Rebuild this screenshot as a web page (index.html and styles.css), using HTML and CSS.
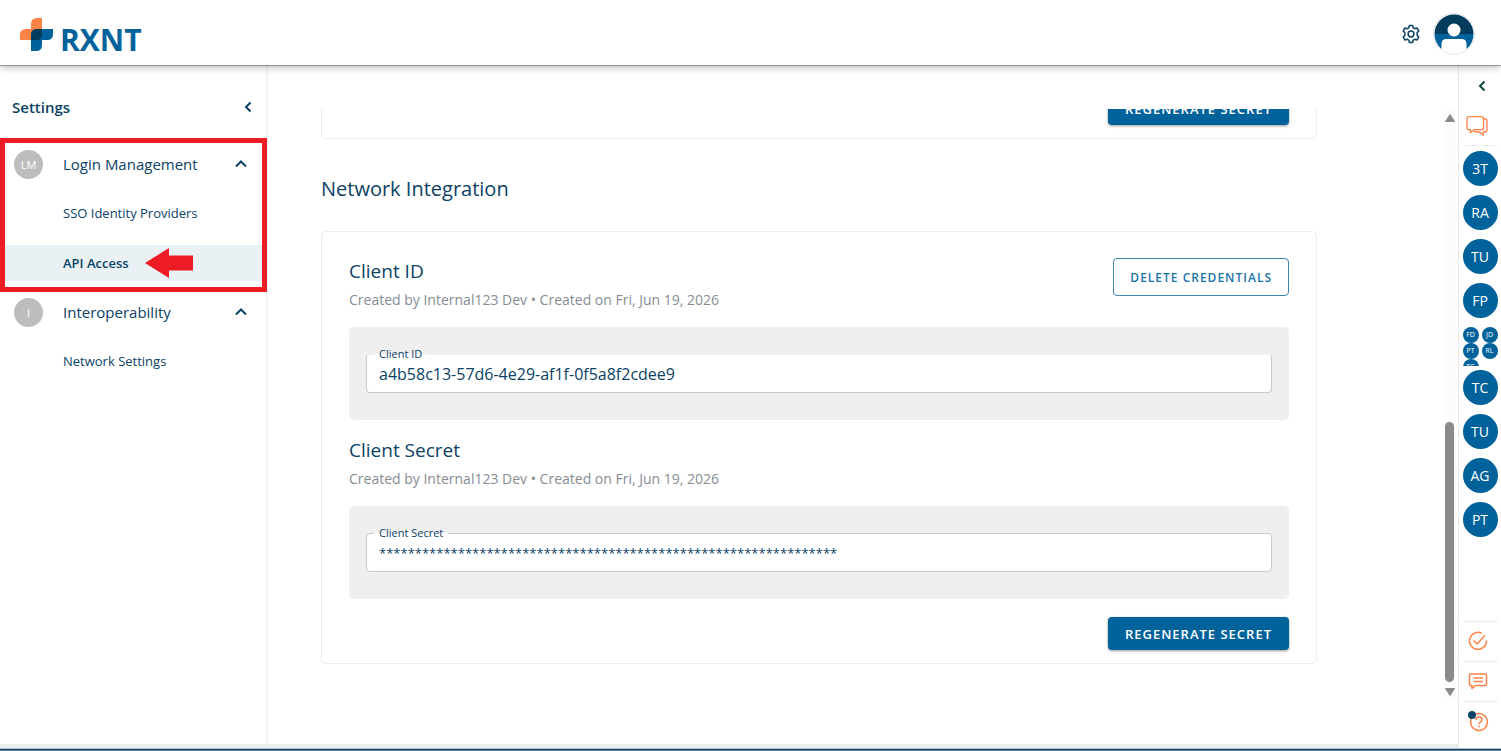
FILE: index.html
```html
<!DOCTYPE html>
<html lang="en">
<head>
<meta charset="utf-8">
<title>RXNT Settings</title>
<link rel="stylesheet" href="styles.css">
</head>
<body>
<div class="app">
  <header class="topbar">
    <a class="logo" href="#">
      <svg width="33" height="33" viewBox="0 0 33 33" aria-hidden="true">
        <path d="M11 11V6Q11 0 17 0H22V16Q22 22 16 22H0V17Q0 11 6 11Z" fill="#ff8246"/>
        <path d="M17 11H33V16Q33 22 27 22H22V27Q22 33 16 33H11V17Q11 11 17 11Z" fill="#00629b"/>
        <path d="M17 11H22V16Q22 22 16 22H11V17Q11 11 17 11Z" fill="#023b5c"/>
      </svg>
      <span class="logo-name">RXNT</span>
    </a>
    <div class="topbar-actions">
      <button class="icon-button" aria-label="Settings">
        <svg width="20" height="20" viewBox="0 0 20 20" fill="none" stroke="#0b4265" stroke-width="1.5" stroke-linejoin="round">
          <path d="M8.4 1.5h3.2l.6 2.3 1.5.9 2.3-.7 1.8 2.9-1.7 1.8v2.6l1.7 1.8-1.8 2.9-2.3-.7-1.5.9-.6 2.3H8.4l-.6-2.3-1.5-.9-2.3.7-1.8-2.9 1.7-1.8V8.7L2.200 6.900 4 4l2.300.7 1.500-.9z"/>
          <circle cx="10" cy="10" r="2.900"/>
        </svg>
      </button>
      <button class="icon-button" aria-label="Account">
        <svg width="42" height="42" viewBox="0 0 42 42">
          <circle cx="21" cy="21" r="20.500" fill="#fff" stroke="#e3e6e8"/>
          <path d="M1.500 21a19.500 19.500 0 0 1 39 0z" fill="#023b5c"/>
          <path d="M1.500 21a19.500 19.500 0 0 0 7 15V31q0-5 5-5h15q5 0 5 5v5a19.500 19.500 0 0 0 7-15z" fill="#00629b"/>
          <circle cx="21" cy="17" r="6.500" fill="#fff"/>
        </svg>
      </button>
    </div>
  </header>

  <div class="body">
    <div class="workspace">
      <div class="columns">
        <nav class="sidebar" aria-label="Settings">
          <div class="sidebar-head">
            <h2 class="sidebar-title">Settings</h2>
            <button class="icon-button" aria-label="Collapse settings">
              <svg width="12" height="12" viewBox="0 0 12 12" fill="none" stroke="#0b4265" stroke-width="2"><path d="M8.500 1.500 4 6l4.500 4.500"/></svg>
            </button>
          </div>
          <section class="group group-marked">
            <button class="group-head">
              <span class="badge">LM</span>
              <span class="group-name">Login Management</span>
              <svg width="12" height="12" viewBox="0 0 12 12" fill="none" stroke="#0b4265" stroke-width="2"><path d="M1 8.500l5-5 5 5"/></svg>
            </button>
            <a class="nav-link" href="#">SSO Identity Providers</a>
            <a class="nav-link nav-link-active" href="#" aria-current="page">API Access
              <svg width="48" height="30" viewBox="0 0 48 30"><path d="M0 15 24 0v7.500h24v15H24V30z" fill="#ed1c24"/></svg>
            </a>
          </section>
          <section class="group">
            <button class="group-head">
              <span class="badge">I</span>
              <span class="group-name">Interoperability</span>
              <svg width="12" height="12" viewBox="0 0 12 12" fill="none" stroke="#0b4265" stroke-width="2"><path d="M1 8.500l5-5 5 5"/></svg>
            </button>
            <a class="nav-link" href="#">Network Settings</a>
          </section>
        </nav>

        <main class="main">
          <div class="viewport">
            <div class="card card-previous">
              <button class="button button-solid">REGENERATE SECRET</button>
            </div>
            <h1 class="section-title">Network Integration</h1>
            <div class="card">
              <div class="card-head">
                <div>
                  <h2 class="card-title">Client ID</h2>
                  <p class="meta">Created by Internal123 Dev • Created on Fri, Jun 19, 2026</p>
                </div>
                <button class="button button-outline">DELETE CREDENTIALS</button>
              </div>
              <div class="panel">
                <div class="field field-soft">
                  <label class="field-label" for="client-id">Client ID</label>
                  <input class="field-input" id="client-id" type="text" readonly value="a4b58c13-57d6-4e29-af1f-0f5a8f2cdee9">
                </div>
              </div>
              <div class="card-head card-head-next">
                <div>
                  <h2 class="card-title">Client Secret</h2>
                  <p class="meta">Created by Internal123 Dev • Created on Fri, Jun 19, 2026</p>
                </div>
              </div>
              <div class="panel">
                <div class="field">
                  <label class="field-label" for="client-secret">Client Secret</label>
                  <input class="field-input field-secret" id="client-secret" type="text" readonly value="****************************************************************">
                </div>
              </div>
              <button class="button button-solid">REGENERATE SECRET</button>
            </div>
          </div>
          <div class="scrollbar" aria-hidden="true">
            <svg width="10" height="8" viewBox="0 0 10 8"><path d="M5 0.500 9.500 7.500H.5z" fill="#8a8a8a" stroke="#8a8a8a" stroke-linejoin="round"/></svg>
            <div class="scroll-space"></div>
            <div class="scroll-thumb"></div>
            <svg width="10" height="8" viewBox="0 0 10 8"><path d="M5 7.500 9.500.5H.5z" fill="#8a8a8a" stroke="#8a8a8a" stroke-linejoin="round"/></svg>
          </div>
        </main>
      </div>
      <div class="strip"></div>
    </div>

    <aside class="rail" aria-label="Messages">
      <button class="icon-button rail-toggle" aria-label="Expand messages">
        <svg width="12" height="12" viewBox="0 0 12 12" fill="none" stroke="#0b4a3f" stroke-width="2"><path d="M8.500 1.500 4 6l4.500 4.500"/></svg>
      </button>
      <button class="icon-button rail-chat" aria-label="Conversations">
        <svg width="22" height="22" viewBox="0 0 22 22" fill="none" stroke="#ff8246" stroke-width="1.300" stroke-linejoin="round">
          <path d="M3 1.700h12.500q2 0 2 2v9q0 2-2 2H8l-3.500 2.800v-2.800H3q-2 0-2-2v-9q0-2 2-2z"/>
          <path d="M17.500 4H19q2 0 2 2v9q0 2-2 2h-1.800v3.300L13.500 17H9.500l-2-1.500"/>
        </svg>
      </button>
      <div class="people">
        <button class="person">3T</button>
        <button class="person">RA</button>
        <button class="person">TU</button>
        <button class="person">FP</button>
        <button class="cluster">
          <span class="mini">FD</span><span class="mini">JD</span>
          <span class="mini">PT</span><span class="mini">RL</span>
          <span class="mini">TC</span>
        </button>
        <button class="person">TC</button>
        <button class="person">TU</button>
        <button class="person">AG</button>
        <button class="person">PT</button>
      </div>
      <div class="tools">
        <button class="tool" aria-label="Tasks">
          <svg width="20" height="20" viewBox="0 0 20 20" fill="none" stroke="#ff8246" stroke-width="1.500">
            <path d="M13.800 2.300A8.500 8.500 0 1 0 18.500 9.500"/><path d="M5.500 9.500 9.300 13 17 4.300"/>
          </svg>
        </button>
        <button class="tool" aria-label="Messages">
          <svg width="20" height="20" viewBox="0 0 20 20" fill="none" stroke="#ff8246" stroke-width="1.500" stroke-linejoin="round">
            <path d="M2.500 3h15q1 0 1 1v9.500q0 1-1 1H7.500L4 17.500v-3H2.500q-1 0-1-1V4q0-1 1-1z"/><path d="M5.500 7h9.500M5.500 10.500h9.500"/>
          </svg>
        </button>
        <button class="tool" aria-label="Help">
          <svg width="22" height="22" viewBox="0 0 22 22" fill="none" stroke="#ff8246" stroke-width="1.500">
            <circle cx="12" cy="12" r="8.500"/><path d="M9 10q0-3 3-3t3 2.500q0 1.500-1.500 2.300T12 14"/><path d="M12 15.500v1.800"/>
            <circle cx="5" cy="5" r="4" fill="#0b4265" stroke="none"/>
          </svg>
        </button>
      </div>
    </aside>
  </div>
  <footer class="baseline"></footer>
</div>
</body>
</html>
```
FILE: styles.css
```css
* {
  box-sizing: border-box;
}

body {
  margin: 0;
  background: #fff;
  color: #0b4265;
  font-family: "Open Sans", "Noto Sans", sans-serif;
  font-size: 13px;
}

h1, h2, p {
  margin: 0;
}

button {
  font: inherit;
  color: inherit;
  background: none;
  border: 0;
  padding: 0;
  cursor: pointer;
}

a {
  color: inherit;
  text-decoration: none;
}

svg {
  display: block;
  flex: none;
}

.app {
  display: flex;
  flex-direction: column;
  height: 100vh;
}

/* Top bar */
.topbar {
  position: relative;
  z-index: 2;
  display: flex;
  flex: none;
  align-items: center;
  justify-content: space-between;
  height: 65px;
  padding: 3px 26px 0 20px;
  background: #fff;
  box-shadow: 0 1px 1px rgba(0, 0, 0, 0.3), 0 3px 8px rgba(0, 0, 0, 0.22);
}

.logo {
  display: flex;
  align-items: center;
  gap: 7px;
}

.logo-name {
  color: #00629b;
  font-size: 30px;
  font-weight: 700;
  line-height: 32px;
  padding-top: 11px;
}

.topbar-actions {
  display: flex;
  align-items: center;
  gap: 12px;
}

.icon-button {
  display: flex;
  align-items: center;
  justify-content: center;
}

.body {
  display: flex;
  flex: 1;
  min-height: 0;
}

.workspace {
  display: flex;
  flex: 1;
  flex-direction: column;
  min-width: 0;
}

.columns {
  display: flex;
  flex: 1;
  min-height: 0;
}

.strip {
  height: 4px;
  background: #eee;
}

.baseline {
  flex: none;
  height: 3px;
  background: #0c3f5f;
  border-top: 1px solid #b5c9d6;
  border-bottom: 1px solid #5c88a0;
}

/* Sidebar */
.sidebar {
  flex: none;
  width: 268px;
  border-right: 2px solid #f3f3f3;
}

.sidebar-head {
  display: flex;
  align-items: center;
  justify-content: space-between;
  height: 77px;
  padding: 7px 12px 0;
}

.sidebar-title {
  font-size: 15px;
  font-weight: 600;
}

.group {
  position: relative;
  padding-bottom: 9px;
}

.group-marked::after {
  content: "";
  position: absolute;
  inset: -4px -1px -2px 0;
  border: 5px solid #ed1c24;
  pointer-events: none;
}

.group-head {
  display: flex;
  align-items: center;
  width: 100%;
  height: 44px;
  padding: 0 19px 0 14px;
  text-align: left;
}

.badge {
  display: flex;
  align-items: center;
  justify-content: center;
  width: 29px;
  height: 29px;
  border-radius: 50%;
  background: #bdbdbd;
  color: #fff;
  font-size: 11px;
}

.group-name {
  flex: 1;
  padding-left: 20px;
  font-size: 15px;
}

.nav-link {
  display: flex;
  align-items: center;
  gap: 16px;
  height: 36px;
  margin-top: 9px;
  padding-left: 63px;
  font-size: 13px;
}

.nav-link-active {
  margin-top: 14px;
  background: #eaf1f5;
  font-weight: 600;
}

/* Main column */
.main {
  display: flex;
  flex: 1;
  min-width: 0;
  padding: 44px 2px 45px 0;
}

.viewport {
  display: flex;
  flex: 1;
  flex-direction: column;
  justify-content: flex-end;
  min-width: 0;
  padding: 0 126px 35px 53px;
  overflow: hidden;
}

.card {
  display: flex;
  flex: none;
  flex-direction: column;
  padding: 26px 27px 13px;
  border: 1px solid #ededed;
  border-radius: 5px;
}

.card-previous {
  border-top: 0;
}

.section-title {
  flex: none;
  margin: 36px 0 28px;
  font-size: 20px;
  font-weight: 400;
  line-height: 28px;
}

.card-head {
  display: flex;
  align-items: flex-start;
  justify-content: space-between;
  padding-bottom: 16px;
}

.card-head-next {
  padding-top: 17px;
}

.card-title {
  font-size: 19px;
  font-weight: 500;
  line-height: 27px;
}

.meta {
  margin-top: 4px;
  color: #868d94;
  font-size: 14px;
  line-height: 22px;
}

.button {
  display: flex;
  align-items: center;
  justify-content: center;
  border-radius: 4px;
  font-weight: 600;
  letter-spacing: 1px;
}

.button-outline {
  height: 38px;
  padding: 0 16px;
  border: 1px solid #3f87b3;
  color: #1b74a9;
  font-size: 12px;
}

.button-solid {
  align-self: flex-end;
  height: 33px;
  margin-top: 18px;
  padding: 0 17px;
  background: #00629b;
  box-shadow: 0 1px 3px rgba(0, 0, 0, 0.4);
  color: #fff;
  font-size: 13px;
}

.panel {
  padding: 27px 17px;
  border-radius: 5px;
  background: #efefef;
}

.field {
  position: relative;
}

.field-label {
  position: absolute;
  top: -7px;
  left: 8px;
  padding: 0 5px;
  background: linear-gradient(#efefef 50%, #fff 50%);
  font-size: 11px;
  line-height: 14px;
}

.field-input {
  display: block;
  width: 100%;
  height: 39px;
  padding: 0 12px;
  border: 1px solid #c9c9c9;
  border-radius: 4px;
  outline: 0;
  background: #fff;
  color: #0b4265;
  font-family: inherit;
  font-size: 16px;
}

.field-soft .field-input {
  border-top-color: #efefef;
}

.field-secret {
  font-size: 13px;
}

/* Scroll indicator */
.scrollbar {
  display: flex;
  flex: none;
  flex-direction: column;
  align-items: center;
  width: 13px;
  padding: 5px 0 3px;
  background: #fcfcfc;
}

.scroll-space {
  flex: 300;
}

.scroll-thumb {
  flex: 260;
  width: 9px;
  margin-bottom: 6px;
  border-radius: 5px;
  background: #8a8a8a;
}

/* Right rail */
.rail {
  display: flex;
  flex: none;
  flex-direction: column;
  width: 43px;
  padding: 0 3px;
  border-left: 1px solid #e8e8e8;
}

.rail-toggle {
  height: 42px;
  padding-left: 3px;
}

.rail-chat {
  height: 39px;
  padding-right: 7px;
  border-bottom: 1px solid #efefef;
}

.people {
  display: flex;
  flex: 1;
  flex-direction: column;
  align-items: center;
  padding-top: 5px;
}

.person {
  flex: none;
  width: 35px;
  height: 35px;
  margin-bottom: 9px;
  border-radius: 50%;
  background: #00629b;
  color: #fff;
  font-size: 14px;
}

.cluster {
  display: grid;
  flex: none;
  grid-template-columns: 16px 16px;
  grid-auto-rows: 16px;
  align-content: start;
  column-gap: 3px;
  height: 39px;
  margin-bottom: 4px;
  overflow: hidden;
}

.mini {
  border-radius: 50%;
  background: #00629b;
  color: #fff;
  font-size: 7px;
  line-height: 16px;
  text-align: center;
}

.tools {
  padding-bottom: 7px;
}

.tool {
  display: flex;
  align-items: center;
  justify-content: center;
  width: 100%;
  height: 40px;
  padding: 0 4px 2px 0;
  border-top: 1px solid #ececec;
}
```
